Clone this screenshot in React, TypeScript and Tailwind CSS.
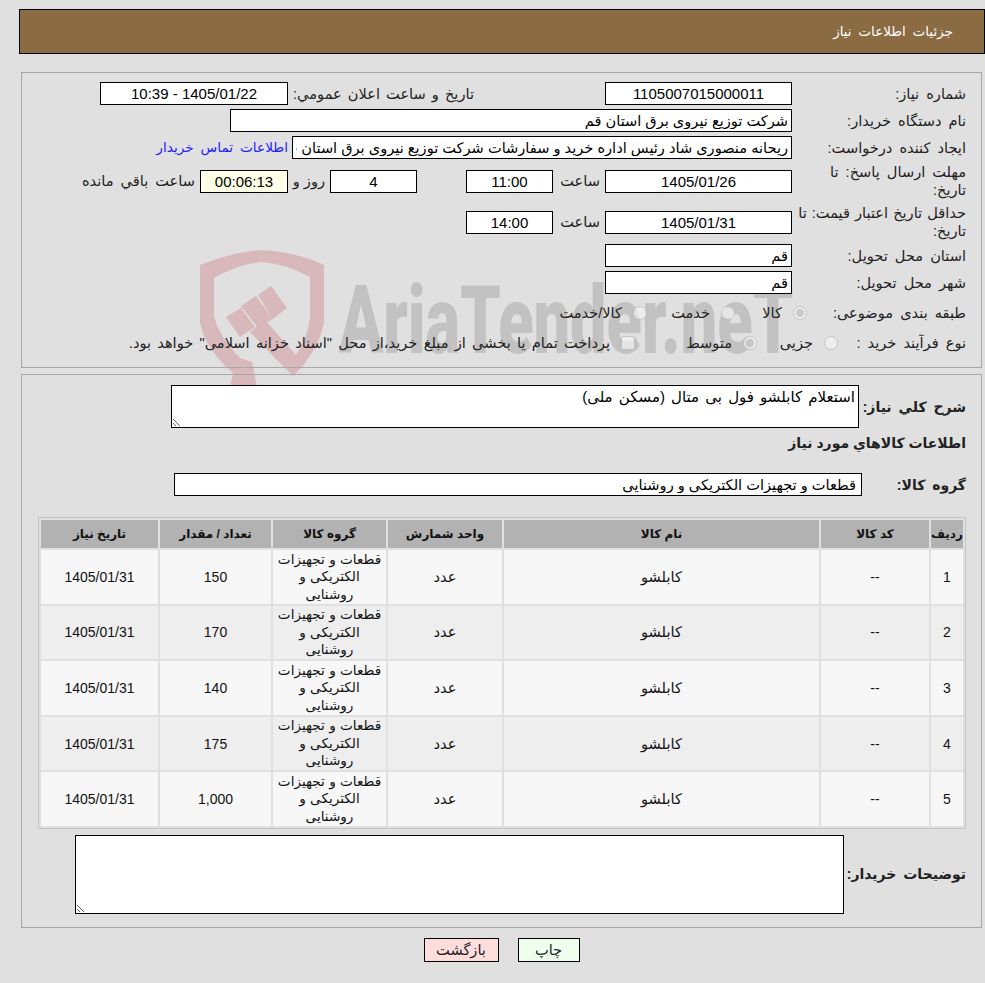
import React from "react";

const rows = [
  { id: "1", qty: "150" },
  { id: "2", qty: "170" },
  { id: "3", qty: "140" },
  { id: "4", qty: "175" },
  { id: "5", qty: "1,000" },
];

const Field = ({ value, className }: { value: string; className: string }) => (
  <input
    readOnly
    value={value}
    className={`h-[23px] shrink-0 border border-black px-[3px] text-black outline-none ${className}`}
  />
);

const Label = ({ children, className }: { children: React.ReactNode; className: string }) => (
  <label className={`shrink-0 text-[#222] ${className}`}>{children}</label>
);

const Option = ({
  text,
  width,
  checked,
  type = "radio",
  textClass,
}: {
  text: string;
  width?: string;
  checked?: boolean;
  type?: string;
  textClass?: string;
}) => (
  <span className={`flex items-center ${width ?? ""}`}>
    <input
      type={type}
      disabled
      defaultChecked={checked}
      className="m-0 h-[14px] w-[14px] shrink-0"
    />
    <span className={`mr-[11px] whitespace-nowrap text-[#222] ${textClass ?? ""}`}>{text}</span>
  </span>
);

const Watermark = () => (
  <div className="pointer-events-none absolute left-0 top-0 h-[430px] w-[985px] overflow-hidden">
    <svg className="absolute left-[195px] top-[245px]" width="140" height="150" viewBox="195 245 140 150">
      <path
        fill="#d8b8ba"
        d="M200 265 Q232 252 262 250 Q296 252 324 265 L324 323 Q318 352 293 376 L279 362 L250 332 L265 320 L296 355 Q308 338 310 317 L310 277 Q286 264 262 262 Q238 264 214 278 L214 317 Q220 338 240 358 L252 362 L258 392 L229 392 L233 373 Q206 350 200 323 Z"
      />
      <path
        fill="#d8b8ba"
        d="M226 317 L241 308 L255 327 L240 337 Z M241 306 L256 296 L273 319 L258 328 Z M258 295 L271 286 L287 308 L273 319 Z"
      />
    </svg>
    <span
      dir="ltr"
      className="absolute left-[339px] top-[265px] origin-left scale-x-[0.69] whitespace-nowrap font-['Roboto',sans-serif] text-[94px] font-black leading-[112px] text-[#c2c2c2]"
    >
      AriaTender.neT
    </span>
  </div>
);

export default function App() {
  return (
    <div
      dir="rtl"
      className="relative min-h-screen overflow-hidden bg-[#e0e0e0] pt-[9px] font-['Liberation_Sans','DejaVu_Sans',sans-serif] text-[14.6px] leading-[18px] text-black [word-spacing:3px]"
    >
      <Watermark />

      <div className="relative">
        <div className="ml-[19px] flex h-[45px] items-center border border-black bg-[#8b6b41] pr-[31px] text-[13.5px] text-white">
          جزئیات اطلاعات نیاز
        </div>

        {/* Need details */}
        <div className="ml-[21px] mr-[3px] mt-[18px] h-[296px] border border-[#a8a8a8] pr-[15px] pt-[9px]">
          <div className="flex h-[23px] items-center">
            <Label className="w-[174px]">شماره نیاز:</Label>
            <Field value="1105007015000011" className="w-[187px] bg-white text-center text-[15px]" />
            <Label className="mr-[131px] w-[186px] [word-spacing:2px]">تاریخ و ساعت اعلان عمومي:</Label>
            <Field value="1405/01/22 - 10:39" className="w-[188px] bg-white text-center text-[15px]" />
          </div>
          <div className="mt-[4px] flex h-[23px] items-center">
            <Label className="w-[174px]">نام دستگاه خریدار:</Label>
            <Field value="شرکت توزیع نیروی برق استان قم" className="w-[562px] bg-white" />
          </div>
          <div className="mt-[4px] flex h-[23px] items-center">
            <Label className="w-[174px]">ایجاد کننده درخواست:</Label>
            <Field
              value="ریحانه منصوری شاد رئیس اداره خرید و سفارشات شرکت توزیع نیروی برق استان قم"
              className="w-[500px] bg-white"
            />
            <a className="mr-[4px] whitespace-nowrap text-[13.7px] text-[#2222ff]">اطلاعات تماس خریدار</a>
          </div>
          <div className="mt-[4px] flex h-[36px] items-center">
            <Label className="w-[174px] pl-[4px]">مهلت ارسال پاسخ: تا تاریخ:</Label>
            <Field value="1405/01/26" className="w-[187px] bg-white text-center text-[15px]" />
            <Label className="w-[52px] pr-[5px]">ساعت</Label>
            <Field value="11:00" className="w-[87px] bg-white text-center text-[15px]" />
            <Field value="4" className="mr-[49px] w-[87px] bg-white text-center text-[15px]" />
            <Label className="w-[42px] pr-[5px] [word-spacing:0px]">روز و</Label>
            <Field value="00:06:13" className="w-[88px] bg-[#ffffe8] text-center text-[15px]" />
            <Label className="pr-[5px]">ساعت باقي مانده</Label>
          </div>
          <div className="mt-[5px] flex h-[36px] items-center">
            <Label className="w-[174px] [word-spacing:1px]">حداقل تاریخ اعتبار قیمت: تا تاریخ:</Label>
            <Field value="1405/01/31" className="w-[187px] bg-white text-center text-[15px]" />
            <Label className="w-[52px] pr-[5px]">ساعت</Label>
            <Field value="14:00" className="w-[87px] bg-white text-center text-[15px]" />
          </div>
          <div className="mt-[4px] flex h-[23px] items-center">
            <Label className="w-[174px]">استان محل تحویل:</Label>
            <Field value="قم" className="w-[187px] bg-white" />
          </div>
          <div className="mt-[4px] flex h-[23px] items-center">
            <Label className="w-[174px]">شهر محل تحویل:</Label>
            <Field value="قم" className="w-[187px] bg-white" />
          </div>
          <div className="mt-[4px] flex h-[30px] items-center">
            <Label className="w-[159px]">طبقه بندی موضوعی:</Label>
            <Option text="کالا" width="w-[72px]" checked />
            <Option text="خدمت" width="w-[88px]" />
            <Option text="کالا/خدمت" />
          </div>
          <div className="flex h-[30px] items-center">
            <Label className="w-[128px]">نوع فرآیند خرید :</Label>
            <Option text="جزیی" width="w-[81px]" />
            <Option text="متوسط" width="w-[122px]" checked />
            <Option
              type="checkbox"
              textClass="[word-spacing:2.2px]"
              text={'پرداخت تمام یا بخشی از مبلغ خرید،از محل "اسناد خزانه اسلامی" خواهد بود.'}
            />
          </div>
        </div>

        {/* Items */}
        <div className="ml-[21px] mr-[3px] mt-[6px] h-[554px] border border-[#a8a8a8] pr-[15px] pt-[10px]">
          <div className="flex h-[43px] items-center">
            <Label className="w-[107px] text-[14px] font-bold">شرح کلي نياز:</Label>
            <textarea
              readOnly
              value="استعلام کابلشو فول بی متال (مسکن ملی)"
              className="h-[43px] w-[688px] border border-black bg-white px-[3px] pt-[2px] text-[15px] outline-none [word-spacing:2px]"
            />
          </div>
          <div className="mt-[3px] flex h-[24px] items-center text-[14px] font-bold text-[#222] [word-spacing:0px]">
            اطلاعات کالاهاي مورد نياز
          </div>
          <div className="mt-[18px] flex h-[23px] items-center">
            <Label className="w-[104px] text-[14px] font-bold">گروه کالا:</Label>
            <Field value="قطعات و تجهیزات الکتریکی و روشنایی" className="w-[688px] bg-white pr-[5px]" />
          </div>

          <table className="mt-[21px] w-[928px] table-fixed border-separate border-spacing-[2px] border border-[#c4c4c4] text-center text-[#111]">
            <colgroup>
              <col className="w-[32px]" />
              <col className="w-[108px]" />
              <col className="w-[315px]" />
              <col className="w-[114px]" />
              <col className="w-[113px]" />
              <col className="w-[111px]" />
              <col className="w-[117px]" />
            </colgroup>
            <thead>
              <tr className="h-[28px] bg-[#b2b2b2] text-[12px] font-bold [word-spacing:0px]">
                <th className="p-0">ردیف</th>
                <th className="p-0">کد کالا</th>
                <th className="p-0">نام کالا</th>
                <th className="p-0">واحد شمارش</th>
                <th className="p-0">گروه کالا</th>
                <th className="p-0">تعداد / مقدار</th>
                <th className="p-0">تاریخ نیاز</th>
              </tr>
            </thead>
            <tbody>
              {rows.map((row, i) => (
                <tr key={row.id} className={`h-[53.6px] ${i % 2 === 0 ? "bg-[#f7f7f7]" : "bg-[#eeeeee]"}`}>
                  <td className="p-0 text-[14px]">{row.id}</td>
                  <td className="p-0 text-[14px]">--</td>
                  <td className="p-0">کابلشو</td>
                  <td className="p-0">عدد</td>
                  <td className="px-[4px] py-0 text-[13.6px] leading-[17.5px] [word-spacing:0.5px]">قطعات و تجهیزات الکتریکی و روشنایی</td>
                  <td className="p-0 text-[14px]">{row.qty}</td>
                  <td className="p-0 text-[14px]">1405/01/31</td>
                </tr>
              ))}
            </tbody>
          </table>

          <div className="mt-[6px] flex h-[79px] items-center">
            <Label className="w-[122px] text-[14px] font-bold">توضیحات خریدار:</Label>
            <textarea
              readOnly
              className="h-[79px] w-[769px] border border-black bg-white px-[3px] outline-none"
            />
          </div>
        </div>

        <div className="mt-[10px] flex justify-center gap-[19px] pl-[18px]">
          <button className="h-[24px] w-[62px] border border-black bg-[#eeffee] text-[#222]">چاپ</button>
          <button className="h-[24px] w-[75px] border border-black bg-[#ffdddd] text-[#222]">بازگشت</button>
        </div>
      </div>
    </div>
  );
}
